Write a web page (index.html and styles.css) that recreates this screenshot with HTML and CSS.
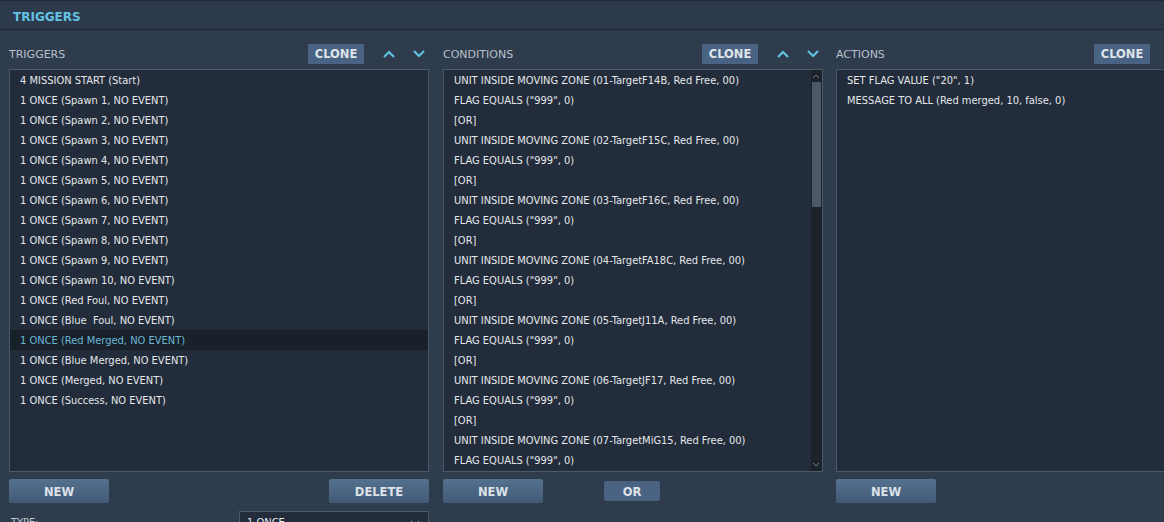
FILE: index.html
```html
<!DOCTYPE html>
<html lang="en">
<head>
	<meta charset="UTF-8">
	<title>Triggers</title>
	<link rel="stylesheet" href="styles.css">
</head>
<body>
	<div class="titlebar">TRIGGERS</div>
	<div class="panels">
		<div class="col col-triggers">
			<div class="col-head">
				<span class="label">TRIGGERS</span>
				<button class="clone">CLONE</button>
				<span class="arrow"><svg width="14" height="10" viewBox="0 0 14 10"><path d="M2 8 L7 3 L12 8" fill="none" stroke="#5ec3e4" stroke-width="2.2"/></svg></span>
				<span class="arrow"><svg width="14" height="10" viewBox="0 0 14 10"><path d="M2 2 L7 7 L12 2" fill="none" stroke="#5ec3e4" stroke-width="2.2"/></svg></span>
			</div>
			<ul class="list">
				<li>4 MISSION START (Start)</li>
				<li>1 ONCE (Spawn 1, NO EVENT)</li>
				<li>1 ONCE (Spawn 2, NO EVENT)</li>
				<li>1 ONCE (Spawn 3, NO EVENT)</li>
				<li>1 ONCE (Spawn 4, NO EVENT)</li>
				<li>1 ONCE (Spawn 5, NO EVENT)</li>
				<li>1 ONCE (Spawn 6, NO EVENT)</li>
				<li>1 ONCE (Spawn 7, NO EVENT)</li>
				<li>1 ONCE (Spawn 8, NO EVENT)</li>
				<li>1 ONCE (Spawn 9, NO EVENT)</li>
				<li>1 ONCE (Spawn 10, NO EVENT)</li>
				<li>1 ONCE (Red Foul, NO EVENT)</li>
				<li>1 ONCE (Blue&nbsp; Foul, NO EVENT)</li>
				<li class="selected">1 ONCE (Red Merged, NO EVENT)</li>
				<li>1 ONCE (Blue Merged, NO EVENT)</li>
				<li>1 ONCE (Merged, NO EVENT)</li>
				<li>1 ONCE (Success, NO EVENT)</li>
			</ul>
			<div class="btn-row">
				<button class="btn">NEW</button>
				<button class="btn">DELETE</button>
			</div>
			<div class="type-row">
				<span class="label">TYPE:</span>
				<div class="select">1 ONCE<svg width="10" height="6" viewBox="0 0 10 6"><path d="M1 1 L5 5 L9 1" fill="none" stroke="#9aa6b3" stroke-width="1"/></svg></div>
			</div>
		</div>

		<div class="col col-conditions">
			<div class="col-head">
				<span class="label">CONDITIONS</span>
				<button class="clone">CLONE</button>
				<span class="arrow"><svg width="14" height="10" viewBox="0 0 14 10"><path d="M2 8 L7 3 L12 8" fill="none" stroke="#5ec3e4" stroke-width="2.2"/></svg></span>
				<span class="arrow"><svg width="14" height="10" viewBox="0 0 14 10"><path d="M2 2 L7 7 L12 2" fill="none" stroke="#5ec3e4" stroke-width="2.2"/></svg></span>
			</div>
			<div class="list-wrap">
				<ul class="list">
					<li>UNIT INSIDE MOVING ZONE (01-TargetF14B, Red Free, 00)</li>
					<li>FLAG EQUALS ("999", 0)</li>
					<li>[OR]</li>
					<li>UNIT INSIDE MOVING ZONE (02-TargetF15C, Red Free, 00)</li>
					<li>FLAG EQUALS ("999", 0)</li>
					<li>[OR]</li>
					<li>UNIT INSIDE MOVING ZONE (03-TargetF16C, Red Free, 00)</li>
					<li>FLAG EQUALS ("999", 0)</li>
					<li>[OR]</li>
					<li>UNIT INSIDE MOVING ZONE (04-TargetFA18C, Red Free, 00)</li>
					<li>FLAG EQUALS ("999", 0)</li>
					<li>[OR]</li>
					<li>UNIT INSIDE MOVING ZONE (05-TargetJ11A, Red Free, 00)</li>
					<li>FLAG EQUALS ("999", 0)</li>
					<li>[OR]</li>
					<li>UNIT INSIDE MOVING ZONE (06-TargetJF17, Red Free, 00)</li>
					<li>FLAG EQUALS ("999", 0)</li>
					<li>[OR]</li>
					<li>UNIT INSIDE MOVING ZONE (07-TargetMiG15, Red Free, 00)</li>
					<li>FLAG EQUALS ("999", 0)</li>
				</ul>
				<div class="scrollbar">
					<svg class="sb-arrow" width="12" height="12" viewBox="0 0 12 12"><path d="M3 8 L6 5 L9 8" fill="none" stroke="#6f7b88" stroke-width="1"/></svg>
					<div class="sb-track"><div class="sb-thumb"></div></div>
					<svg class="sb-arrow" width="12" height="12" viewBox="0 0 12 12"><path d="M3 4 L6 7 L9 4" fill="none" stroke="#6f7b88" stroke-width="1"/></svg>
				</div>
			</div>
			<div class="btn-row">
				<button class="btn">NEW</button>
				<button class="btn btn-or">OR</button>
			</div>
		</div>

		<div class="col col-actions">
			<div class="col-head">
				<span class="label">ACTIONS</span>
				<button class="clone">CLONE</button>
			</div>
			<ul class="list">
				<li>SET FLAG VALUE ("20", 1)</li>
				<li>MESSAGE TO ALL (Red merged, 10, false, 0)</li>
			</ul>
			<div class="btn-row">
				<button class="btn">NEW</button>
			</div>
		</div>
	</div>
</body>
</html>
```

FILE: styles.css
```css
html, body {
	margin: 0;
	height: 100%;
	overflow: hidden;
}
body {
	background: #2e3c4e;
	font-family: "DejaVu Sans Condensed", "DejaVu Sans", sans-serif;
	font-size: 11px;
	color: #e4e8ec;
}
.titlebar {
	height: 30px;
	line-height: 32px;
	padding-left: 13px;
	font-family: "DejaVu Sans", sans-serif;
	font-weight: bold;
	font-size: 12px;
	color: #63c2e3;
	background: #2c3a4b;
	border-top: 1px solid #1f2a36;
	border-bottom: 1px solid #1f2a36;
	box-sizing: border-box;
}
.panels {
	display: flex;
	padding: 13px 0 0 9px;
}
.col {
	display: flex;
	flex-direction: column;
	flex-shrink: 0;
}
.col-triggers { width: 420px; margin-right: 14px; }
.col-conditions { width: 380px; margin-right: 13px; }
.col-actions { width: 340px; }

.col-head {
	display: flex;
	align-items: center;
	height: 21px;
	margin-bottom: 5px;
}
.col-head .label {
	flex: 1;
	font-family: "DejaVu Sans", sans-serif;
	font-size: 11px;
	color: #b8c0c8;
	padding-top: 2px;
}
.clone {
	height: 20px;
	width: 56px;
	border: none;
	background: #4a6383;
	color: #dfe4ea;
	font-family: "DejaVu Sans", sans-serif;
	font-weight: bold;
	font-size: 11.5px;
	padding: 0;
}
.col-triggers .clone { margin-left: -1px; }
.col-actions .clone { margin-right: 26px; }
.arrow {
	width: 20px;
	margin-left: 10px;
	display: flex;
	justify-content: center;
}
.clone + .arrow { margin-left: 15px; }

.list {
	list-style: none;
	margin: 0;
	padding: 0;
	background: #222c3a;
	border: 1px solid #4b5a6b;
	height: 403px;
	box-sizing: border-box;
	overflow: hidden;
}
.col-actions .list { margin-right: -20px; }
.list li {
	height: 20px;
	line-height: 21px;
	padding-left: 10px;
	white-space: nowrap;
}
.list li.selected {
	background: #18202a;
	color: #6ab8d6;
}
.list-wrap {
	position: relative;
}
.list-wrap .list {
	padding-right: 12px;
}
.scrollbar {
	position: absolute;
	top: 1px;
	right: 1px;
	bottom: 1px;
	width: 11px;
	background: #1b222b;
	display: flex;
	flex-direction: column;
}
.sb-arrow { flex-shrink: 0; margin-left: -1px; }
.sb-track { flex: 1; }
.sb-thumb {
	margin: 0 1px;
	height: 125px;
	background: #4a5868;
}

.btn-row {
	display: flex;
	justify-content: space-between;
	align-items: center;
	margin-top: 7px;
	height: 24px;
}
.col-conditions .btn-row { justify-content: flex-start; }
.btn {
	width: 100px;
	height: 24px;
	border: none;
	border-radius: 2px;
	background: linear-gradient(#54718f, #425a76);
	color: #dde2e8;
	font-family: "DejaVu Sans", sans-serif;
	font-weight: bold;
	font-size: 11.5px;
	padding: 2px 0 0;
}
.btn-or {
	width: 56px;
	height: 20px;
	margin-left: 61px;
	background: #4a6383;
}

.type-row {
	display: flex;
	align-items: flex-start;
	margin-top: 8px;
}
.type-row .label {
	flex: 1;
	padding-left: 2px;
	padding-top: 5px;
	color: #c0c8d0;
}
.select {
	width: 190px;
	height: 20px;
	border: 1px solid #4b5a6b;
	background: #222c3a;
	padding: 3px 8px 0 7px;
	box-sizing: border-box;
	display: flex;
	justify-content: space-between;
	align-items: center;
}
```
